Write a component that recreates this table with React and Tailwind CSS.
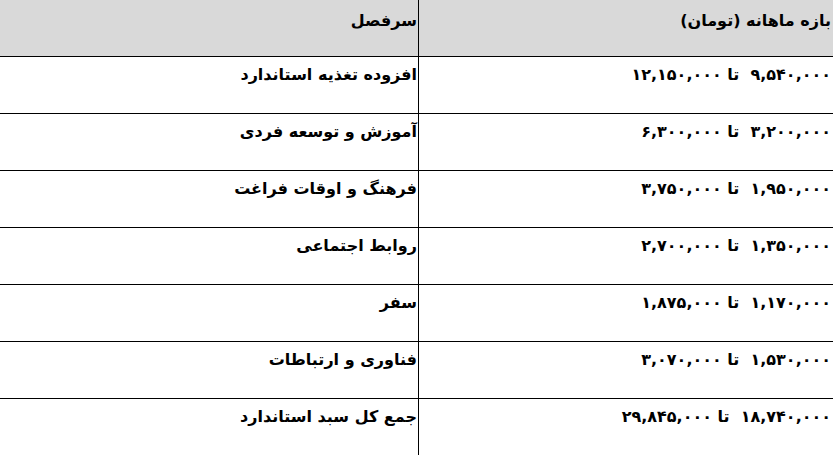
import React from "react";

const rows = [
  { title: "افزوده تغذیه استاندارد", range: "۹,۵۴۰,۰۰۰  تا ۱۲,۱۵۰,۰۰۰" },
  { title: "آموزش و توسعه فردی", range: "۳,۲۰۰,۰۰۰  تا ۶,۳۰۰,۰۰۰" },
  { title: "فرهنگ و اوقات فراغت", range: "۱,۹۵۰,۰۰۰  تا ۳,۷۵۰,۰۰۰" },
  { title: "روابط اجتماعی", range: "۱,۳۵۰,۰۰۰  تا ۲,۷۰۰,۰۰۰" },
  { title: "سفر", range: "۱,۱۷۰,۰۰۰  تا ۱,۸۷۵,۰۰۰" },
  { title: "فناوری و ارتباطات", range: "۱,۵۳۰,۰۰۰  تا ۳,۰۷۰,۰۰۰" },
  { title: "جمع کل سبد استاندارد", range: "۱۸,۷۴۰,۰۰۰  تا ۲۹,۸۴۵,۰۰۰" },
];

const App = () => {
  return (
    <div
      dir="rtl"
      className="w-[833px] h-[455px] overflow-hidden bg-white text-black font-bold text-[16px]"
      style={{ fontFamily: '"DejaVu Sans", "Noto Sans", sans-serif' }}
    >
      <div className="grid grid-cols-[415px_418px] h-[57px] bg-[#d9d9d9] border-b border-black">
        <div className="pt-[9px] pr-[2px] border-l border-black">بازه ماهانه (تومان)</div>
        <div className="pt-[9px] pr-[1px]">سرفصل</div>
      </div>
      {rows.map((row) => (
        <div
          key={row.title}
          className="grid grid-cols-[415px_418px] h-[57px] border-b border-black"
        >
          <div className="pt-[6px] pr-[2px] border-l border-black whitespace-pre">{row.range}</div>
          <div className="pt-[6px] pr-[1px]">{row.title}</div>
        </div>
      ))}
    </div>
  );
};

export default App;
